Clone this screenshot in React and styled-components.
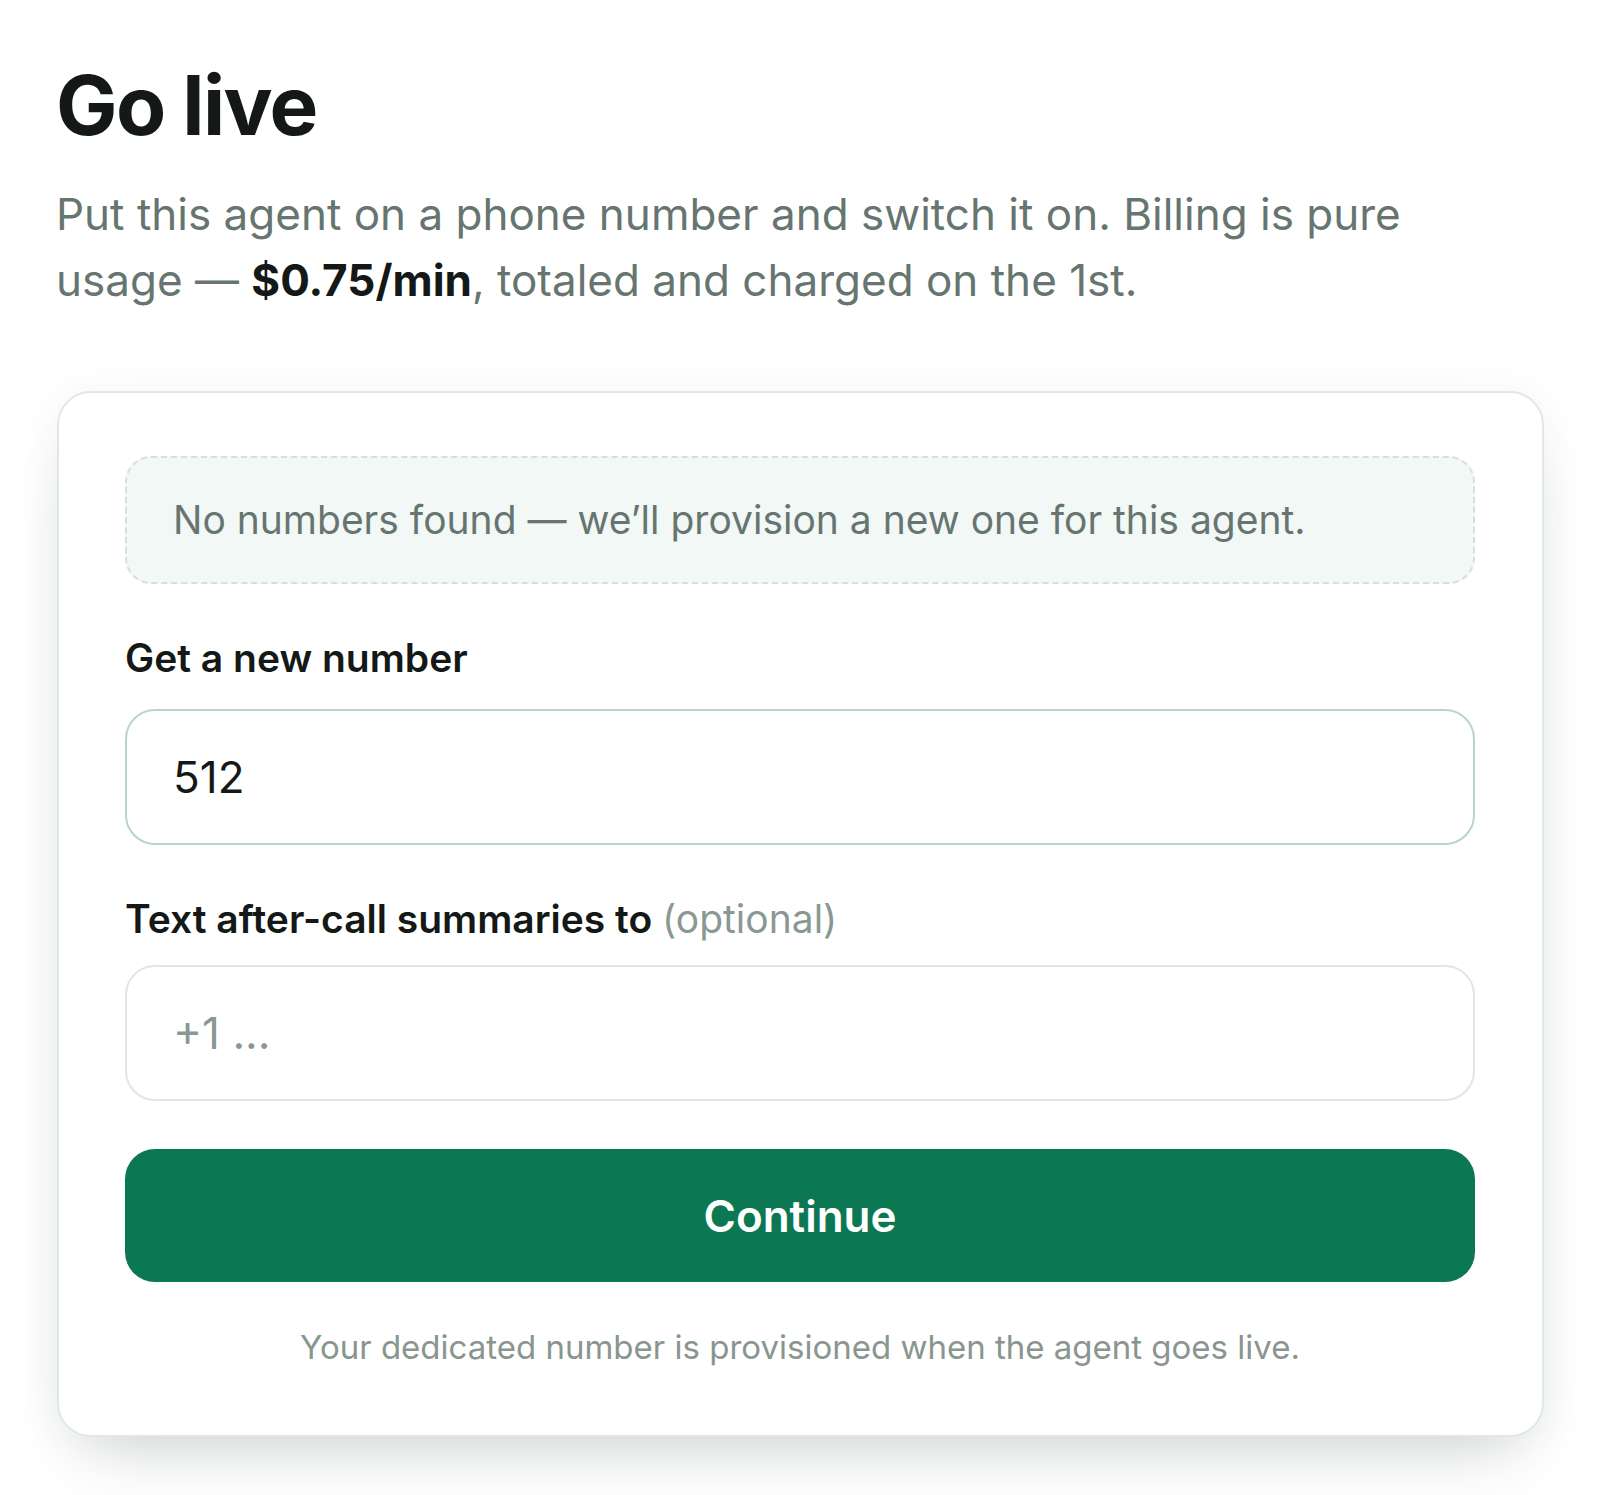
import React, { useState } from 'react'
import styled, { createGlobalStyle } from 'styled-components'

const GlobalStyle = createGlobalStyle`
  html, body {
    margin: 0;
    padding: 0;
    background: #ffffff;
  }
  body {
    font-family: Inter, "Noto Sans", "Liberation Sans", sans-serif;
    color: #141816;
    -webkit-font-smoothing: antialiased;
  }
  * {
    box-sizing: border-box;
  }
`;

export default function App() {
    const [areaCode, setAreaCode] = useState("512");
    const [summaryPhone, setSummaryPhone] = useState("");

    return (
        <>
            <GlobalStyle />
            <Page>
                <Title>Go live</Title>
                <Lead>
                    Put this agent on a phone number and switch it on. Billing is pure
                    usage — <strong>$0.75/min</strong>, totaled and charged on the 1st.
                </Lead>

                <Card>
                    <Notice>No numbers found — we’ll provision a new one for this agent.</Notice>

                    <Field $gap={25}>
                        <Label htmlFor="area-code">Get a new number</Label>
                        <Input
                            id="area-code"
                            $active
                            value={areaCode}
                            onChange={(e) => setAreaCode(e.target.value)}
                        />
                    </Field>

                    <Field $gap={20}>
                        <Label htmlFor="summary-phone">
                            Text after-call summaries to <Optional>(optional)</Optional>
                        </Label>
                        <Input
                            id="summary-phone"
                            placeholder="+1 ..."
                            value={summaryPhone}
                            onChange={(e) => setSummaryPhone(e.target.value)}
                        />
                    </Field>

                    <Actions>
                        <ContinueButton type="button">Continue</ContinueButton>
                        <Footnote>Your dedicated number is provisioned when the agent goes live.</Footnote>
                    </Actions>
                </Card>
            </Page>
        </>
    );
}

const Page = styled.main`
  width: 1600px;
  min-height: 1495px;
  padding: 58px 56px 58px 56px;
  display: flex;
  flex-direction: column;
`;

const Title = styled.h1`
  margin: 0;
  font-size: 82px;
  line-height: 96px;
  font-weight: 700;
  letter-spacing: -0.02em;
  color: #141816;
`;

const Lead = styled.p`
  margin: 27px 0 0;
  font-size: 44px;
  line-height: 66px;
  font-weight: 400;
  color: #66756f;
  max-width: 1440px;
  strong {
    font-weight: 700;
    color: #141816;
  }
`;

const Card = styled.section`
  margin-top: 78px;
  margin-left: 1px;
  border: 2px solid #e0e8e5;
  border-radius: 34px;
  background: #ffffff;
  padding: 63px 67px 66px 66px;
  display: flex;
  flex-direction: column;
  gap: 48px;
  box-shadow: 0 40px 70px -30px rgba(30, 50, 42, 0.18), 0 6px 44px rgba(30, 50, 42, 0.06);
`;

const Notice = styled.div`
  border: 2px dashed #d4e0dc;
  border-radius: 26px;
  background: #f2f8f6;
  padding: 35px 46px;
  font-size: 39px;
  line-height: 54px;
  color: #66756f;
`;

const Field = styled.div`
  display: flex;
  flex-direction: column;
  gap: ${(p) => p.$gap}px;
`;

const Label = styled.label`
  font-size: 39px;
  line-height: 52px;
  font-weight: 600;
  color: #141816;
`;

const Optional = styled.span`
  font-weight: 400;
  color: #8a9893;
`;

const Input = styled.input`
  height: 136px;
  width: 100%;
  border: 2px solid ${(p) => (p.$active ? "#b9d5cb" : "#dfe7e4")};
  border-radius: 30px;
  background: #ffffff;
  padding: 0 46px;
  font-family: inherit;
  font-size: 44px;
  color: #141816;
  outline: none;
  &::placeholder {
    color: #8a9893;
  }
`;

const Actions = styled.div`
  display: flex;
  flex-direction: column;
  gap: 43px;
`;

const ContinueButton = styled.button`
  height: 133px;
  width: 100%;
  border: none;
  border-radius: 30px;
  background: #0c7853;
  color: #ffffff;
  font-family: inherit;
  font-size: 44px;
  font-weight: 600;
  cursor: pointer;
`;

const Footnote = styled.p`
  margin: 0;
  text-align: center;
  font-size: 33px;
  line-height: 44px;
  color: #89958f;
`;
